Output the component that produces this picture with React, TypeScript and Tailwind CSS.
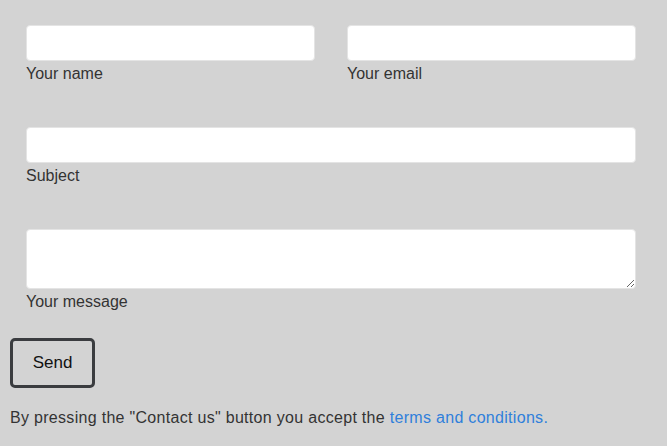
export default function App() {
  return (
    <div className="min-h-screen bg-[#d3d3d3] pl-[10px] pr-[15px] pt-[25px] font-['Liberation_Sans',Arial,sans-serif] text-[16px] leading-6 text-[#333]">
      <form onSubmit={(e) => e.preventDefault()}>
        <div className="grid grid-cols-2">
          <div className="px-4">
            <input type="text" className="block h-9 w-full rounded border border-[#e4e4e4] bg-white px-2 outline-none" />
            <label className="block pt-px">Your name</label>
          </div>
          <div className="px-4">
            <input type="email" className="block h-9 w-full rounded border border-[#e4e4e4] bg-white px-2 outline-none" />
            <label className="block pt-px">Your email</label>
          </div>
        </div>

        <div className="mt-[41px] px-4">
          <input type="text" className="block h-9 w-full rounded border border-[#e4e4e4] bg-white px-2 outline-none" />
          <label className="block pt-px">Subject</label>
        </div>

        <div className="mt-[41px] px-4">
          <textarea className="block h-[60px] w-full rounded border border-[#e4e4e4] bg-white px-2 outline-none" />
          <label className="block pt-px">Your message</label>
        </div>

        <button
          type="submit"
          className="mt-6 h-[50px] w-[85px] rounded-[5px] border-[3px] border-[#3a3c3f] text-[17px] text-[#111]"
        >
          Send
        </button>

        <p className="mt-[18px] tracking-[0.3px]">
          By pressing the "Contact us" button you accept the{" "}
          <a href="#" className="text-[#2f7fdb]">
            terms and conditions.
          </a>
        </p>
      </form>
    </div>
  );
}
